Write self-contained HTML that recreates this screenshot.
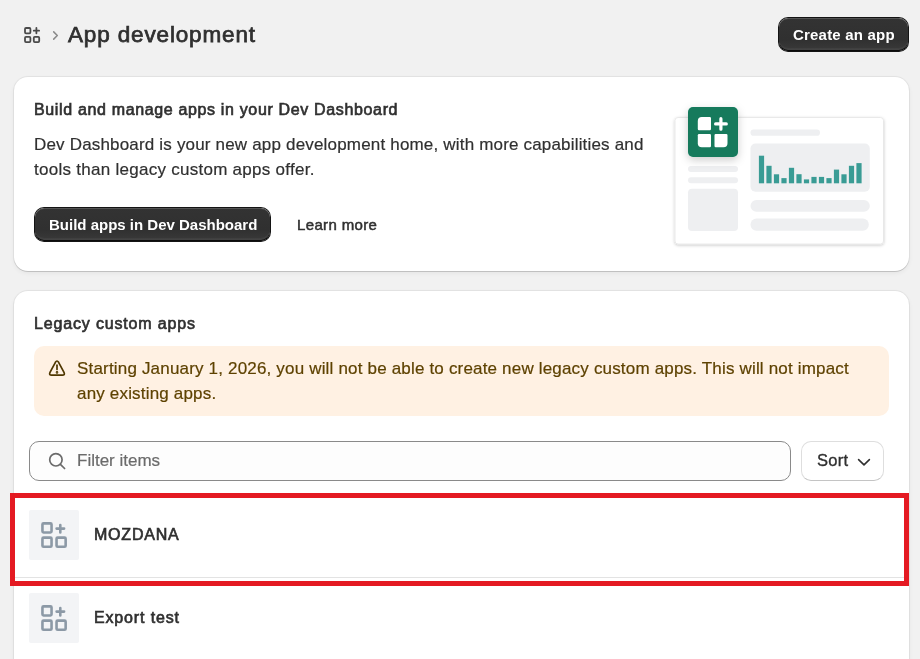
<!DOCTYPE html>
<html><head><meta charset="utf-8">
<style>
*{box-sizing:border-box;margin:0;padding:0}
html,body{width:920px;height:659px;overflow:hidden;background:#f1f1f1;font-family:"Liberation Sans",sans-serif;color:#303030}
.abs{position:absolute}
.t{position:absolute;white-space:nowrap;will-change:transform}
.title{left:67.5px;top:20.1px;font-size:22.5px;line-height:30px;font-weight:normal;letter-spacing:.85px;color:#303030;-webkit-text-stroke:.75px #303030}
.btn-dark{position:absolute;background:linear-gradient(#333 0%,#303030 65%,#3a3a3a 100%);border-radius:9px;box-shadow:0 0 0 1px #141414, inset 0 -1px 0 #0c0c0c, inset 0 1px 0 rgba(255,255,255,.16), inset 0 -3px 1px rgba(255,255,255,.05)}
.btxt{font-size:15px;line-height:20px;font-weight:bold;color:#fff}
.card{position:absolute;background:#fff;border-radius:14px;box-shadow:0 1px 0 rgba(0,0,0,.12),0 0 0 1px rgba(0,0,0,.05),0 2px 5px rgba(0,0,0,.06)}
.h2{font-size:16px;line-height:20px;font-weight:normal;letter-spacing:.65px;color:#303030;-webkit-text-stroke:.65px #303030}
.body{font-size:17px;line-height:25px;letter-spacing:.18px;color:#303030;-webkit-text-stroke:.2px currentColor}
</style></head><body>
<!-- header icon -->
<svg class="abs" style="left:0;top:0" width="80" height="60" viewBox="0 0 80 60" fill="none" stroke="#4a4a4a" stroke-width="1.8">
  <rect x="25" y="28" width="5.4" height="5.3" rx="1"/>
  <rect x="25" y="36.9" width="5.4" height="5.2" rx="1"/>
  <rect x="33.8" y="36.9" width="5.4" height="5.2" rx="1"/>
  <path d="M36.4 27.9v5.4M33.8 30.7h5.3" stroke-linecap="round"/>
  <path d="M53.7 31.9l3.6 3.6-3.6 3.6" stroke="#8a8a8a" stroke-width="1.5" stroke-linecap="round" stroke-linejoin="round"/>
</svg>
<div class="t title">App development</div>
<div class="btn-dark" style="left:779px;top:18px;width:129px;height:33px"></div>
<div class="t btxt" style="left:793px;top:25px;letter-spacing:.2px">Create an app</div>

<!-- card 1 -->
<div class="card" style="left:14px;top:77px;width:895px;height:194px"></div>
<div class="t h2" style="left:34px;top:99.5px">Build and manage apps in your Dev Dashboard</div>
<div class="t body" style="left:34px;top:131.5px">Dev Dashboard is your new app development home, with more capabilities and</div>
<div class="t body" style="left:34px;top:156.5px;letter-spacing:.27px">tools than legacy custom apps offer.</div>
<div class="btn-dark" style="left:35px;top:208px;width:235px;height:33px"></div>
<div class="t btxt" style="left:49px;top:214.5px">Build apps in Dev Dashboard</div>
<div class="t" style="left:297px;top:214.5px;font-size:15px;line-height:20px;font-weight:normal;letter-spacing:.35px;color:#303030;-webkit-text-stroke:.5px #303030">Learn more</div>

<!-- illustration -->
<svg class="abs" style="left:660px;top:95px" width="240" height="165" viewBox="660 95 240 165">
  <defs>
    <filter id="sh" x="-20%" y="-20%" width="140%" height="150%"><feDropShadow dx="0" dy="1" stdDeviation="1.5" flood-color="#000" flood-opacity=".22"/></filter>
    <filter id="sh2" x="-40%" y="-40%" width="180%" height="200%"><feDropShadow dx="0" dy="3" stdDeviation="4.5" flood-color="#000" flood-opacity=".2"/></filter>
  </defs>
  <rect x="675" y="117.5" width="208.5" height="126.5" rx="3" fill="#fff" stroke="#e4e4e4" stroke-width=".8" filter="url(#sh)"/>
  <rect x="688" y="166" width="50" height="6" rx="3" fill="#eeeff1"/>
  <rect x="688" y="177.3" width="50" height="6" rx="3" fill="#eeeff1"/>
  <rect x="688" y="188.8" width="50" height="42.2" rx="4" fill="#eeeff1"/>
  <rect x="750.5" y="129.6" width="69.5" height="6.2" rx="3.1" fill="#eeeff1"/>
  <rect x="750.5" y="143.6" width="119.3" height="48.2" rx="5" fill="#eeeff1"/>
  <rect x="750.5" y="200" width="119.3" height="11.8" rx="5.9" fill="#eeeff1"/>
  <rect x="750.5" y="218.6" width="118.3" height="12.2" rx="6" fill="#eeeff1"/>
  <g fill="#3a9c95">
    <rect x="758.9" y="155.7" width="5.2" height="27.6"/>
    <rect x="766.4" y="165.8" width="5.2" height="17.5"/>
    <rect x="773.9" y="174.3" width="5.2" height="9"/>
    <rect x="781.4" y="178.1" width="5.2" height="5.2"/>
    <rect x="788.9" y="167.8" width="5.2" height="15.5"/>
    <rect x="796.4" y="174.2" width="5.2" height="9.1"/>
    <rect x="803.9" y="179.4" width="5.2" height="3.9"/>
    <rect x="811.4" y="176.9" width="5.2" height="6.4"/>
    <rect x="818.9" y="176.9" width="5.2" height="6.4"/>
    <rect x="826.4" y="178.1" width="5.2" height="5.2"/>
    <rect x="833.9" y="169.6" width="5.2" height="13.7"/>
    <rect x="841.4" y="174.3" width="5.2" height="9"/>
    <rect x="848.9" y="165.8" width="5.2" height="17.5"/>
    <rect x="856.4" y="163.1" width="5.2" height="20.2"/>
  </g>
  <rect x="688" y="107" width="50" height="50" rx="5" fill="#137a5b" filter="url(#sh2)"/>
  <g fill="#fff">
    <path d="M701.8 117.1H709.8A1.2 1.2 0 0 1 711 118.3V129.1A1.2 1.2 0 0 1 709.8 130.3H699A1.2 1.2 0 0 1 697.8 129.1V121.1A4 4 0 0 1 701.8 117.1Z"/>
    <path d="M699 134H709.8A1.2 1.2 0 0 1 711 135.2V146A1.2 1.2 0 0 1 709.8 147.2H701.8A4 4 0 0 1 697.8 143.2V135.2A1.2 1.2 0 0 1 699 134Z"/>
    <path d="M715.7 134H726.3A1.2 1.2 0 0 1 727.5 135.2V143.2A4 4 0 0 1 723.5 147.2H715.7A1.2 1.2 0 0 1 714.5 146V135.2A1.2 1.2 0 0 1 715.7 134Z"/>
    <path d="M720.9 118.7v10.5M715.6 123.9h10.7" stroke="#fff" stroke-width="3.2" stroke-linecap="round"/>
  </g>
</svg>

<!-- card 2 -->
<div class="card" style="left:14px;top:291px;width:895px;height:420px"></div>
<div class="t h2" style="left:34px;top:313.5px;letter-spacing:.84px">Legacy custom apps</div>
<div class="abs" style="left:34px;top:346px;width:855px;height:70px;background:#fff1e3;border-radius:10px"></div>
<svg class="abs" style="left:40px;top:352px" width="32" height="32" viewBox="40 352 32 32" fill="none" stroke="#4f3700" stroke-width="1.7" stroke-linejoin="round">
  <path d="M55.4 362.3Q57 359.7 58.6 362.3L64 372.4Q65.3 375.2 62.3 375.2H51.7Q48.7 375.2 50 372.4Z"/>
  <path d="M57 365.2v4.2" stroke-linecap="round"/>
  <circle cx="57" cy="372.4" r=".45" fill="#4f3700"/>
</svg>
<div class="t body" style="left:77px;top:355.6px;color:#5e4200">Starting January 1, 2026, you will not be able to create new legacy custom apps. This will not impact<br>any existing apps.</div>

<div class="abs" style="left:29px;top:441px;width:762px;height:40px;border:1px solid #8a8a8a;border-radius:10px;background:#fdfdfd"></div>
<svg class="abs" style="left:42px;top:446px" width="30" height="30" viewBox="42 446 30 30" fill="none" stroke="#6b6b6b" stroke-width="1.7" stroke-linecap="round">
  <circle cx="55.9" cy="459.8" r="6.2"/>
  <path d="M60.4 464.3l4.2 4.2"/>
</svg>
<div class="t body" style="left:77px;top:447.8px;color:#6b6b6b;letter-spacing:0">Filter items</div>
<div class="abs" style="left:801px;top:441px;width:83px;height:40px;border-radius:10px;background:#fff;border:1px solid #dedede;border-bottom-color:#c4c4c4"></div>
<div class="t" style="left:816.5px;top:450px;font-size:16.5px;line-height:20px;letter-spacing:.3px;color:#303030;-webkit-text-stroke:.35px #303030">Sort</div>
<svg class="abs" style="left:850px;top:450px" width="30" height="24" viewBox="850 450 30 24" fill="none" stroke="#303030" stroke-width="1.6" stroke-linecap="round" stroke-linejoin="round">
  <path d="M858.6 459.6l5.4 5.2 5.4-5.2"/>
</svg>

<!-- rows -->
<div class="abs" style="left:14px;top:577px;width:895px;height:1px;background:#e3e3e3"></div>
<div class="abs" style="left:29px;top:510px;width:50px;height:50px;background:#f3f4f6;border-radius:2px"></div>
<div class="abs" style="left:29px;top:593px;width:50px;height:50px;background:#f3f4f6;border-radius:2px"></div>
<svg class="abs" style="left:29px;top:510px" width="50" height="50" viewBox="0 0 50 50" fill="none" stroke="#8c99a6" stroke-width="2.6">
  <rect x="13.45" y="13.35" width="9.1" height="9.1" rx="1.1"/>
  <rect x="13.45" y="27.65" width="9.1" height="9.1" rx="1.1"/>
  <rect x="27.55" y="27.65" width="9.1" height="9.1" rx="1.1"/>
  <path d="M31.3 15v7.4M27.6 18.6h7.5" stroke-linecap="round"/>
</svg>
<svg class="abs" style="left:29px;top:593px" width="50" height="50" viewBox="0 0 50 50" fill="none" stroke="#8c99a6" stroke-width="2.6">
  <rect x="13.45" y="13.35" width="9.1" height="9.1" rx="1.1"/>
  <rect x="13.45" y="27.65" width="9.1" height="9.1" rx="1.1"/>
  <rect x="27.55" y="27.65" width="9.1" height="9.1" rx="1.1"/>
  <path d="M31.3 15v7.4M27.6 18.6h7.5" stroke-linecap="round"/>
</svg>
<div class="t h2" style="left:93.5px;top:525px;letter-spacing:.78px">MOZDANA</div>
<div class="t h2" style="left:93.5px;top:608.2px;letter-spacing:.85px">Export test</div>

<div class="abs" style="left:10px;top:493px;width:899px;height:93px;border:5px solid #e41a22"></div>
</body></html>
